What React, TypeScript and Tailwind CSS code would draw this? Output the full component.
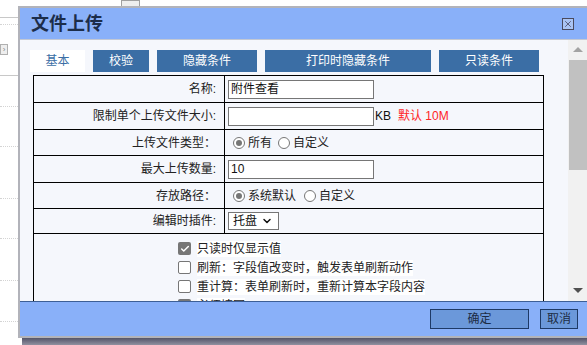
import React from "react";
import { ChevronDown, Check, X } from "lucide-react";

const font = { fontFamily: '"Liberation Sans", "Noto Sans CJK SC", sans-serif' };

const Radio: React.FC<{ checked?: boolean; label: string }> = ({ checked, label }) => (
	<span className="flex items-center">
		<span className="w-[12px] h-[12px] rounded-full border border-[#767676] bg-white flex items-center justify-center">
			{checked && <span className="w-[6px] h-[6px] rounded-full bg-[#767676]" />}
		</span>
		<span className="ml-[3px] text-[12px] text-[#222]">{label}</span>
	</span>
);

const Box: React.FC<{ checked?: boolean; label: string }> = ({ checked, label }) => (
	<div className="flex items-center h-[19px]">
		{checked ? (
			<span className="w-[13px] h-[13px] rounded-[2px] bg-[#767676] flex items-center justify-center">
				<Check size={10} strokeWidth={3.5} className="text-white" />
			</span>
		) : (
			<span className="w-[13px] h-[13px] rounded-[2px] border border-[#767676] bg-white" />
		)}
		<span className="ml-[6px] text-[12px] text-[#222] bg-white leading-[16px]">{label}</span>
	</div>
);

const Row: React.FC<{ h: string; label: string; children?: React.ReactNode }> = ({ h, label, children }) => (
	<div className={`flex border-b border-black ${h}`}>
		<div className="w-[191px] border-r border-black flex items-center justify-end pr-[8px] text-[12px] text-[#222]">
			{label}
		</div>
		<div className="flex-1 flex items-center pl-[3px] gap-[1px]">{children}</div>
	</div>
);

const Input: React.FC<{ value?: string }> = ({ value }) => (
	<div className="w-[146px] h-[19px] border border-[#767676] bg-white text-[12px] text-[#111] px-[2px] flex items-center">
		{value}
	</div>
);

export default function App() {
	const tabs = [
		{ label: "校验", w: "w-[56px]" },
		{ label: "隐藏条件", w: "w-[100px]" },
		{ label: "打印时隐藏条件", w: "w-[166px]" },
		{ label: "只读条件", w: "w-[100px]" },
	];

	return (
		<div className="relative w-[587px] h-[345px] overflow-hidden bg-white" style={font}>
			{/* page behind the dialog */}
			<div className="flex h-full">
				<div className="w-[18px] flex flex-col">
					<div className="h-[18px] border-b border-[#c8c8c8]" />
					<div className="mt-[6px] border-b border-dotted border-[#d4d4d4]" />
					<div className="mt-[19px] w-[8px] h-[11px] border border-[#b0b0b0] bg-[#eeeeee] text-[8px] leading-[9px] text-[#888] text-center">›</div>
					<div className="mt-[20px] border-b border-[#c8c8c8]" />
					<div className="mt-[30px] border-b border-dotted border-[#d4d4d4]" />
					<div className="mt-[39px] border-b border-dotted border-[#d4d4d4]" />
					<div className="mt-[51px] border-b border-dotted border-[#d4d4d4]" />
					<div className="mt-[39px] border-b border-dotted border-[#d4d4d4]" />
					<div className="mt-[41px] border-b border-dotted border-[#d4d4d4]" />
					<div className="mt-[40px] border-b border-dotted border-[#d4d4d4]" />
				</div>
				<div className="ml-[103px] w-[19px] h-[8px] border border-[#a0a0a0] bg-[#eeeeee]" />
			</div>

			{/* dialog */}
			<div className="absolute left-[18px] top-[6px] w-[571px] flex flex-col">
				<div className="border-2 border-[#b2b3ba] flex flex-col">
					<div className="h-[32px] bg-[#89b0f9] border-b border-[#c3c8d4] flex items-center justify-between pl-[11px] pr-[13px]">
						<span className="text-[18px] font-bold text-[#1c2d4a] leading-none">文件上传</span>
						<span className="w-[12px] h-[12px] border border-[#4a4a5e] bg-[#aac4f4] flex items-center justify-center">
							<X size={10} strokeWidth={2} className="text-[#4a4a66]" />
						</span>
					</div>

					<div className="h-[261px] flex">
						<div className="flex-1 bg-[#f5f7fc] overflow-hidden pt-[10px] pl-[10px]">
							<div className="flex gap-[8px] h-[22px]">
								<div className="w-[55px] bg-white text-[#3b6ea5] text-[12px] flex items-center justify-center">基本</div>
								{tabs.map((t) => (
									<div key={t.label} className={`${t.w} bg-[#3b6ea5] text-white text-[12px] flex items-center justify-center`}>
										{t.label}
									</div>
								))}
							</div>

							<div className="mt-[3px] ml-[3px] w-[511px] border-l border-t border-r border-black">
								<Row h="h-[27px]" label="名称:">
									<Input value="附件查看" />
								</Row>
								<Row h="h-[27px]" label="限制单个上传文件大小:">
									<Input />
									<span className="text-[12px] text-[#111]">KB</span>
									<span className="ml-[6px] text-[12px] text-[#ff2626]">默认 10M</span>
								</Row>
								<Row h="h-[26px]" label="上传文件类型：">
									<div className="pl-[5px] flex gap-[6px]">
										<Radio checked label="所有" />
										<Radio label="自定义" />
									</div>
								</Row>
								<Row h="h-[27px]" label="最大上传数量:">
									<Input value="10" />
								</Row>
								<Row h="h-[26px]" label="存放路径：">
									<div className="pl-[5px] flex gap-[8px]">
										<Radio checked label="系统默认" />
										<Radio label="自定义" />
									</div>
								</Row>
								<Row h="h-[25px]" label="编辑时插件:">
									<div className="w-[51px] h-[18px] border border-[#767676] bg-white flex items-center pl-[4px] gap-[4px] text-[12px] text-[#111]">
										托盘
										<ChevronDown size={12} strokeWidth={3} className="text-[#111]" />
									</div>
								</Row>
								<div className="pl-[144px] pt-[5px] h-[120px]">
									<Box checked label="只读时仅显示值" />
									<Box label="刷新：字段值改变时，触发表单刷新动作" />
									<Box label="重计算：表单刷新时，重新计算本字段内容" />
									<Box checked label="必须填写" />
								</div>
							</div>
						</div>

						<div className="w-[19px] bg-[#f1f1f1] flex flex-col items-center">
							<div className="h-[17px] flex items-center justify-center pt-[2px]">
								<span className="w-0 h-0 border-l-[5px] border-r-[5px] border-b-[5px] border-l-transparent border-r-transparent border-b-[#a3a3a3]" />
							</div>
							<div className="mt-[3px] w-[18px] ml-[1px] h-[110px] bg-[#c1c1c1]" />
							<div className="flex-1" />
							<div className="h-[17px] flex items-center justify-center pb-[4px]">
								<span className="w-0 h-0 border-l-[5px] border-r-[5px] border-t-[5px] border-l-transparent border-r-transparent border-t-[#505050]" />
							</div>
						</div>
					</div>

					<div className="h-[35px] bg-[#89b0f9] border-t border-[#3d5f96] flex items-start justify-end pt-[7px] pr-[9px] gap-[11px]">
						<div className="w-[99px] h-[20px] bg-[#6b98da] border border-[#1e3a66] text-[12px] text-[#1c2c44] flex items-center justify-center">确定</div>
						<div className="w-[38px] h-[20px] bg-[#6b98da] border border-[#1e3a66] text-[12px] text-[#1c2c44] flex items-center justify-center">取消</div>
					</div>
				</div>
				<div className="h-[8px] ml-[4px] bg-gradient-to-b from-[#55556a] to-[#9a9aa8]" />
			</div>
		</div>
	);
}
